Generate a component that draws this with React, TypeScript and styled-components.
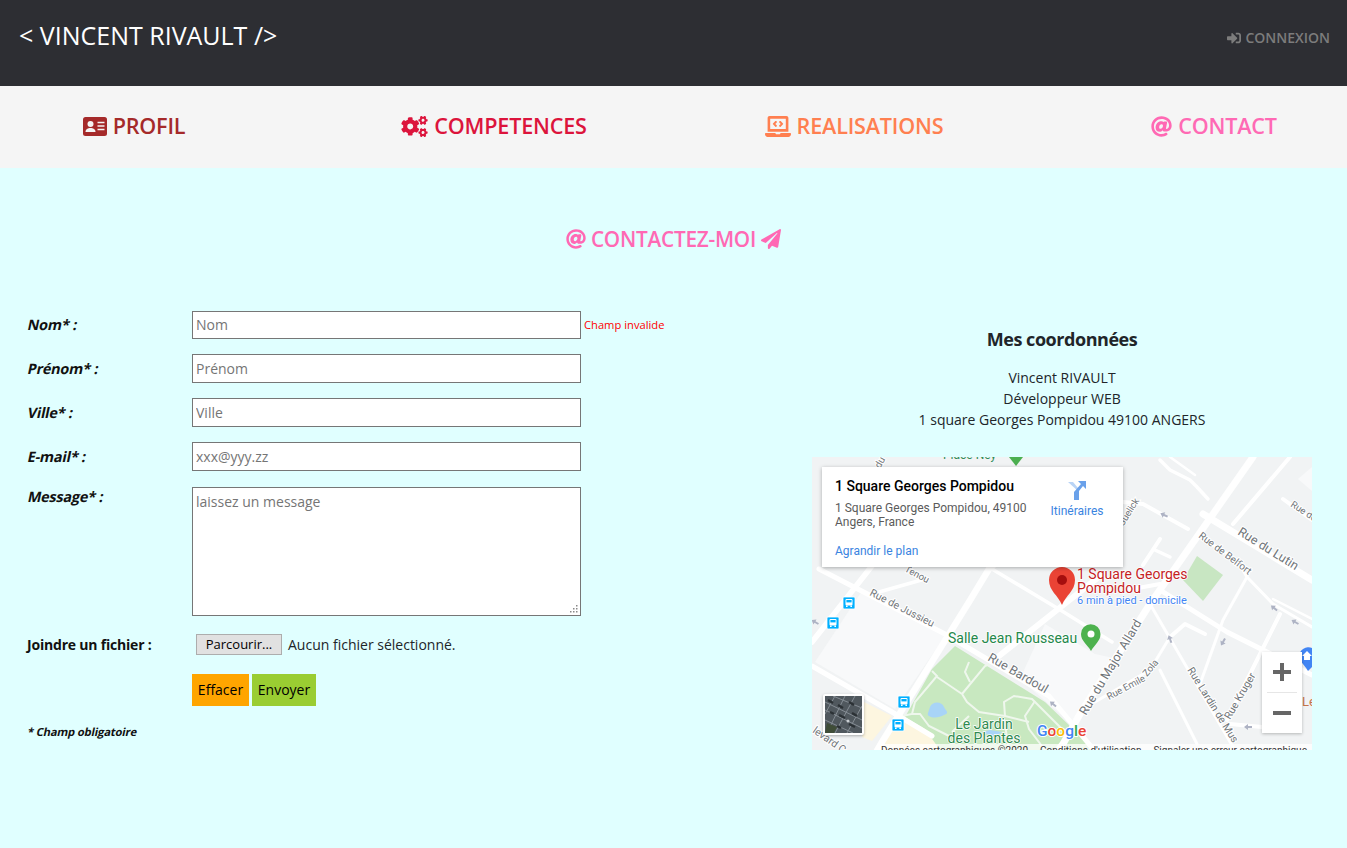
import React from "react";
import styled, { createGlobalStyle } from "styled-components";
import { FaCogs, FaLaptopCode, FaAt, FaPaperPlane, FaSignInAlt } from "react-icons/fa";

const Global = createGlobalStyle`
  html, body { margin: 0; padding: 0; background: #e0ffff; }
  body { font-family: "Open Sans", "Liberation Sans", sans-serif; font-size: 14px; color: #212529; overflow: hidden; }
`;
const Page = styled.div`width: 1347px; height: 848px; background: #e0ffff; overflow: hidden;`;
const TopBar = styled.header`
  height: 86px; background: #2d2e33; display: flex; justify-content: space-between; align-items: flex-start;
  padding: 0 17px 0 19px; box-sizing: border-box;
`;
const Brand = styled.div`color: #fff; font-size: 25px; line-height: 33px; margin-top: 19px;`;
const Login = styled.a`
  color: #7c7c7c; font-size: 14px; font-weight: 600; line-height: 20px; margin-top: 28px; display: flex; align-items: center; gap: 4px;
  svg { width: 14px; height: 14px; flex: none; }
`;
const NavBar = styled.nav`
  height: 82px; box-sizing: border-box; padding: 0 0 2px 1px; background: #f5f5f5; display: grid; grid-template-columns: repeat(4, 266px); column-gap: 94px; align-items: center;
`;
const NavItem = styled.a<{ $color: string; $iconW: number }>`
  color: ${(p) => p.$color}; font-size: 21.6px; font-weight: 600; letter-spacing: -0.2px;
  display: flex; justify-content: center; align-items: center; gap: 6px; line-height: 28px;
  svg { width: ${(p) => p.$iconW}px; height: 21px; flex: none; }
`;
const PageTitle = styled.h1`
  margin: 0; padding: 57px 0 57.6px; box-sizing: border-box; display: flex; justify-content: center; align-items: center; gap: 5px;
  color: #ff69b4; font-size: 20.8px; font-weight: 600; line-height: 28px; letter-spacing: -0.25px;
  svg { width: 20px; height: 20px; flex: none; }
`;
const Content = styled.main`display: flex; justify-content: space-between; padding: 0 35px 0 28px;`;
const FormArea = styled.form`display: flex; flex-direction: column; width: 660px;`;
const Row = styled.div`display: grid; grid-template-columns: 164px 389px auto; align-items: center; margin-bottom: 15px;`;
const Label = styled.label`
  display: block; font-size: 14.4px; font-weight: 700; color: #111; letter-spacing: -0.2px;
  transform: skewX(-12deg); transform-origin: left center; white-space: nowrap;
`;
const TextInput = styled.input`
  width: 389px; height: 28.8px; box-sizing: border-box; border: 1px solid #767676; background: #fff; padding: 0 3px; margin: 0;
  font: 14px "Open Sans", sans-serif; &::placeholder { color: #757575; opacity: 1; }
`;
const ErrorText = styled.span`font-size: 11.2px; color: #f00; padding-left: 3px;`;
const MessageRow = styled.div`display: grid; grid-template-columns: 164px 389px; margin-top: 1px;`;
const MessageLabel = styled(Label)`line-height: 20px; align-self: start;`;
const MessageBox = styled.div`position: relative; width: 389px; height: 129px;`;
const MessageInput = styled.textarea`
  width: 389px; height: 129px; box-sizing: border-box; border: 1px solid #767676; background: #fff; padding: 4px 3px; margin: 0; resize: none;
  font: 14px/19px "Open Sans", sans-serif; display: block; &::placeholder { color: #757575; opacity: 1; }
`;
const Grip = styled.svg`position: absolute; right: 3px; bottom: 3px;`;
const FileRow = styled.div`display: flex; align-items: center; margin-top: 18px; height: 21px;`;
const FileLabel = styled.label`font-size: 14px; font-weight: 700; color: #111; width: 169px; margin-left: -1px; letter-spacing: -0.2px;`;
const FileButton = styled.button`
  width: 86px; height: 21px; padding: 0; box-sizing: border-box; background: #e1e1e1; border: 1px solid #adadad; font: 13px "Open Sans", sans-serif; color: #000; margin-right: 6px;
`;
const FileStatus = styled.span`font-size: 14px; color: #212529;`;
const Actions = styled.div`display: flex; gap: 3px; margin: 19px 0 0 164px;`;
const ActionButton = styled.button<{ $bg: string; $w: number }>`
  background: ${(p) => p.$bg}; width: ${(p) => p.$w}px; height: 32px; border: 0; padding: 0; font: 14px "Open Sans", sans-serif; color: #000;
`;
const Note = styled.p`
  margin: 18px 0 0; font-size: 11.2px; line-height: 15px; font-weight: 700; color: #111; letter-spacing: -0.15px;
  transform: skewX(-12deg); transform-origin: left center;
`;
const Side = styled.aside`width: 500px; display: flex; flex-direction: column; align-items: center;`;
const SideTitle = styled.h2`margin: 16.4px 0 0; font-size: 18px; line-height: 25px; font-weight: 700; color: #212529; letter-spacing: -0.45px;`;
const Address = styled.p`margin: 15px 0 0; text-align: center; line-height: 21px; font-size: 14px; color: #212529;`;
const MapFrame = styled.div`position: relative; width: 500px; height: 293px; margin-top: 27px; overflow: hidden; background: #f1f3f4; font-family: Roboto, sans-serif;`;
const MapArt = styled.svg`display: block;`;
const InfoCard = styled.div`
  position: absolute; left: 10px; top: 10px; width: 301px; height: 100px; background: #fff; box-shadow: 0 1px 4px rgba(0,0,0,.3);
  padding: 10px 13px; box-sizing: border-box;
`;
const InfoTitle = styled.div`font-size: 14px; font-weight: 500; color: #000; line-height: 18px; white-space: nowrap;`;
const InfoAddr = styled.div`font-size: 12px; line-height: 14px; color: #5b5b5b; margin-top: 6px; width: 200px;`;
const InfoLink = styled.a`position: absolute; left: 13px; top: 77px; font-size: 12px; line-height: 14px; color: #3a84df;`;
const Directions = styled.div`
  position: absolute; left: 221px; top: 14px; width: 68px; display: flex; flex-direction: column; align-items: center; gap: 4px; font-size: 12px; line-height: 14px; color: #3a84df;
`;
const ZoomBox = styled.div`
  position: absolute; left: 450px; top: 195px; width: 40px; height: 81px; background: #fff; box-shadow: 0 1px 3px rgba(0,0,0,.25);
  display: flex; flex-direction: column; align-items: center; justify-content: space-between;
`;
const ZoomBtn = styled.div`height: 40px; width: 30px; display: flex; align-items: center; justify-content: center;`;
const ZoomLine = styled.div`height: 1px; width: 30px; background: #e6e6e6;`;
const Thumb = styled.div`
  position: absolute; left: 11px; top: 237px; width: 41px; height: 41px; box-sizing: border-box; border: 2px solid #fff; border-radius: 2px; overflow: hidden; box-shadow: 0 1px 3px rgba(0,0,0,.3); background: #4b5358;
`;
const Attribution = styled.div`
  position: absolute; left: 69px; right: 0; top: 287px; height: 20px; background: rgba(255,255,255,.75); display: flex; gap: 12px; font-size: 10px; line-height: 14px; color: #333; white-space: nowrap;
`;

const roads: [string, number][] = [
  ["M1253 458 L1150 605 L1080 715 L1063 745 L1050 762", 7],
  ["M1203 515 L1312 581", 7],
  ["M999 657 L1062 607 L1100 577", 6],
  ["M1000 560 L989 570 L969 603 L882 743 L875 755", 6.5],
  ["M819 570 L945 635 L1049 697 L1094 751", 5],
  ["M992 570 L1062 612 L1112 643", 3.5],
  ["M875 563 L812 643", 5.5],
  ["M812 667 L892 713 L932 737", 5],
  ["M879 593 L925 580", 3.5],
  ["M1290 458 L1233 525", 4],
  ["M1123 503 L1143 505 L1188 530", 4],
  ["M1160 461 L1170 471 L1190 481 L1197 488 L1208 500", 3.5],
  ["M1170 458 L1195 476", 2.5],
  ["M1160 540 L1143 566", 4],
  ["M1155 551 L1170 558", 3.5],
  ["M1198 536 L1237 561 L1247 578 L1223 621 L1200 685", 3],
  ["M1247 578 L1273 605 L1312 628", 3],
  ["M1273 600 L1312 620", 2.5],
  ["M1160 591 L1227 633 L1263 651 L1312 676", 5],
  ["M1280 615 L1227 721", 4],
  ["M1150 605 L1233 748", 3],
  ["M1170 638 L1150 671 L1095 703", 3],
  ["M1170 638 L1185 625 L1205 635", 4],
  ["M1160 671 L1197 745", 3],
  ["M1230 725 L1262 728", 4],
  ["M1283 500 L1312 521", 4],
  ["M1127 591 L1160 585", 4],
];
const parkPaths: string[] = [
  "M932 672 L937 677 L915 703 L912 715 L902 717",
  "M912 715 L920 715 L929 727 L949 737",
  "M937 678 L962 695",
  "M962 695 L985 667 L990 665",
  "M962 695 L967 703 L979 713 L1005 717 L1029 723",
  "M969 663 L965 673 L970 683",
  "M1005 717 L1004 703 L1014 697 L1032 700 L1069 737",
  "M1035 702 L1025 717 L1029 730 L1045 751",
  "M969 717 L952 733",
  "M1004 720 L1009 751",
];

const Bus = ({ x, y }: { x: number; y: number }) => (
  <g transform={`translate(${x - 6} ${y - 6})`}>
    <rect width="12" height="12" rx="1" fill="#00b0ff" stroke="#fff" strokeWidth="0.8" />
    <rect x="2.5" y="2" width="7" height="6.6" rx="1" fill="#fff" />
    <rect x="3.4" y="3" width="5.2" height="2.4" fill="#00b0ff" />
    <rect x="3" y="8.6" width="1.6" height="1.4" fill="#fff" />
    <rect x="7.4" y="8.6" width="1.6" height="1.4" fill="#fff" />
  </g>
);

const Street = ({ x, y, r, size = 10.5, children }: { x: number; y: number; r: number; size?: number; children: string }) => (
  <text x={x} y={y} fontSize={size} fill="#6f7478" stroke="#fff" strokeWidth="2" paintOrder="stroke" transform={`rotate(${r} ${x} ${y})`} fontFamily="Roboto, sans-serif">
    {children}
  </text>
);

const Arrow = ({ x, y, r }: { x: number; y: number; r: number }) => (
  <path d="M-4 0 L0 -3 L0 -1 L4 -1 L4 1 L0 1 L0 3 Z" fill="#aeb3c4" transform={`translate(${x} ${y}) rotate(${r})`} />
);

const PlaceLabel = styled.text`font-family: Roboto, sans-serif; stroke: #fff; stroke-width: 1.5px; paint-order: stroke;`;

const MapDrawing = () => (
  <MapArt width="500" height="293" viewBox="812 458 500 293">
    <rect x="812" y="458" width="500" height="293" fill="#f1f3f4" />
    <path d="M862 592 L945 637 L895 710 L815 663 Z" fill="#f8f9fa" />
    <path d="M1045 625 L1095 655 L1118 660 L1075 728 L1020 680 Z" fill="#f8f9fa" />
    <path d="M1298 480 L1312 468 L1312 492 Z" fill="#f8f9fa" />
    <path d="M864 703 L892 717 L872 742 L862 738 Z" fill="#fdf6e0" />
    <path d="M902 723 L882 742 L880 751 L945 751 L922 727 Z" fill="#fdf6e0" />
    <path d="M1197 557 L1223 576 L1203 602 L1183 581 Z" fill="#c8e6c2" />
    <path d="M955 647 L1045 703 L1095 751 L940 751 L925 730 L905 718 L932 670 Z" fill="#c8e8c0" />
    <path d="M930 708 C932 702 942 702 944 708 C946 712 950 714 944 716 C938 720 926 719 928 714 Z" fill="#a8d4f7" />
    <path d="M982 733 L990 731 L1002 733 L994 738 Z" fill="#a8d4f7" />
    {parkPaths.map((d) => <path key={d} d={d} fill="none" stroke="#eff7ed" strokeWidth="2" />)}
    {roads.map(([d, w]) => <path key={d} d={d} fill="none" stroke="#fff" strokeWidth={w} strokeLinecap="round" strokeLinejoin="round" />)}

    <Street x={869} y={596} r={27}>Rue de Jussieu</Street>
    <Street x={987} y={661} r={30} size={12.5}>Rue Bardoul</Street>
    <Street x={1086} y={717} r={-59} size={12.5}>Rue du Major Allard</Street>
    <Street x={1109} y={701} r={-28} size={9.5}>Rue Emile</Street>
    <Street x={1147} y={678} r={-50} size={9.5}>Zola</Street>
    <Street x={1187} y={671} r={58}>Rue Lardin de Mus</Street>
    <Street x={1230} y={721} r={-60}>Rue Kruger</Street>
    <Street x={1237} y={535} r={32} size={12.5}>Rue du Lutin</Street>
    <Street x={1198} y={538} r={37} size={10}>Rue de Belfort</Street>
    <Street x={1290} y={507} r={33} size={9.5}>Rue de</Street>
    <Street x={904} y={572} r={28} size={9.5}>Tenou</Street>
    <Street x={1123} y={528} r={-58} size={9.5}>Guelick</Street>
    <Street x={812} y={733} r={35}>levard C</Street>
    <Street x={880} y={470} r={-60} size={10}>du</Street>

    <Arrow x={1164} y={516} r={25} />
    <Arrow x={815} y={623} r={30} />
    <Arrow x={1053} y={705} r={40} />
    <Arrow x={1170} y={640} r={70} />
    <Arrow x={1223} y={643} r={-60} />
    <Arrow x={1248} y={728} r={0} />
    <Arrow x={1274} y={609} r={40} />
    <Arrow x={1295} y={623} r={30} />

    <Bus x={849} y={604} />
    <Bus x={833} y={624} />
    <Bus x={904} y={703} />
    <Bus x={898} y={726} />

    <text x="943" y="460" fontSize="12" fill="#2e8b57" fontFamily="Roboto, sans-serif">Place Ney</text>
    <path d="M1009 458 L1023 458 L1016 467 Z" fill="#4caf50" />

    <PlaceLabel x="948" y="644" fontSize="14" fill="#24874a">Salle Jean Rousseau</PlaceLabel>
    <path d="M1091 652 C1087 645 1081 642 1081 635 A9.500 9.500 0 0 1 1100.500 635 C1100.500 642 1095 645 1091 652 Z" fill="#4db24e" />
    <circle cx="1091" cy="635" r="3.500" fill="#fff" />

    <PlaceLabel x="984" y="730" fontSize="14" textAnchor="middle" fill="#2f8a4f">Le Jardin</PlaceLabel>
    <PlaceLabel x="984" y="744" fontSize="14" textAnchor="middle" fill="#2f8a4f">des Plantes</PlaceLabel>

    <path d="M1062 606 C1058 596 1049 592 1049 581 A13 13 0 0 1 1075 581 C1075 592 1066 596 1062 606 Z" fill="#ea4335" />
    <circle cx="1062" cy="581" r="5" fill="#a50e0e" />
    <PlaceLabel x="1077" y="580" fontSize="14" fill="#c5221f">1 Square Georges</PlaceLabel>
    <PlaceLabel x="1077" y="594" fontSize="14" fill="#c5221f">Pompidou</PlaceLabel>
    <PlaceLabel x="1077" y="605" fontSize="11" fill="#4285f4">6 min à pied - domicile</PlaceLabel>

    <path d="M1308 672 C1304 665 1299 662 1299 657 A9.500 9.500 0 0 1 1312 649 L1312 668 Z" fill="#4285f4" />
    <path d="M1302 657 L1307 652 L1312 657 L1310 657 L1310 661 L1304 661 L1304 657 Z" fill="#fff" />
    <text x="1302" y="707" fontSize="13" fill="#c5744a" fontFamily="Roboto, sans-serif">Le</text>

    <text fontFamily="Roboto, sans-serif" fontSize="15.500" fontWeight="500" x="1037" y="737" stroke="#fff" strokeWidth="2" paintOrder="stroke">
      <tspan fill="#4285f4">G</tspan><tspan fill="#ea4335">o</tspan><tspan fill="#fbbc05">o</tspan><tspan fill="#4285f4">g</tspan><tspan fill="#34a853">l</tspan><tspan fill="#ea4335">e</tspan>
    </text>
  </MapArt>
);

const thumbLines = [
  "M0 6 L37 24", "M0 14 L37 32", "M0 24 L28 37", "M8 0 L37 12",
  "M20 0 L2 37", "M30 0 L10 37", "M10 0 L0 18", "M37 10 L22 37",
];
const thumbShade = ["M3 4 L8 7", "M13 9 L18 12", "M24 6 L29 9", "M14 19 L20 22", "M5 16 L9 18", "M27 17 L32 20", "M24 28 L30 31", "M12 30 L16 32"];
const ThumbArt = () => (
  <svg width="37" height="37" viewBox="0 0 37 37" style={{ display: "block" }}>
    <rect width="37" height="37" fill="#50585e" />
    {thumbLines.map((d) => <path key={d} d={d} stroke="#858d94" strokeWidth="1" />)}
    {thumbShade.map((d) => <path key={d} d={d} stroke="#2b3135" strokeWidth="2.500" />)}
    <path d="M2 27 L12 31 L9 37 L0 37 Z" fill="#3f4d38" />
    <circle cx="23" cy="25" r="1.500" fill="#c9ced2" />
  </svg>
);

const DirectionsIcon = () => (
  <svg width="20" height="19" viewBox="0 0 20 19">
    <path d="M1 1 L6 1 L11 7 L11 10 Z" fill="#b9d4f6" />
    <path d="M7 19 L12 19 L12 10 L16 5 L19 8 L19 0 L11 0 L14 3 L7 11 Z" fill="#6aa1ea" />
  </svg>
);

const IdCardIcon = () => (
  <svg viewBox="0 0 24 19">
    <rect width="24" height="19" rx="2.500" fill="currentColor" />
    <circle cx="7.500" cy="7" r="3" fill="#f5f5f5" />
    <path d="M2.500 15 C2.500 12 5 11 7.500 11 C10 11 12.500 12 12.500 15 Z" fill="#f5f5f5" />
    <path d="M14.500 5.500 H21.500 M14.500 9 H21.500 M14.500 12.500 H21.500" stroke="#f5f5f5" strokeWidth="1.300" />
  </svg>
);

export default function App() {
  return (
    <Page>
      <Global />
      <TopBar>
        <Brand>&lt; VINCENT RIVAULT /&gt;</Brand>
        <Login><FaSignInAlt />CONNEXION</Login>
      </TopBar>
      <NavBar>
        <NavItem $color="#a52a2a" $iconW={24}><IdCardIcon />PROFIL</NavItem>
        <NavItem $color="#dc143c" $iconW={27}><FaCogs />COMPETENCES</NavItem>
        <NavItem $color="#ff7f50" $iconW={26}><FaLaptopCode />REALISATIONS</NavItem>
        <NavItem $color="#ff69b4" $iconW={21}><FaAt />CONTACT</NavItem>
      </NavBar>
      <PageTitle><FaAt />CONTACTEZ-MOI<FaPaperPlane /></PageTitle>
      <Content>
        <FormArea>
          <Row>
            <Label>Nom* :</Label>
            <TextInput placeholder="Nom" />
            <ErrorText>Champ invalide</ErrorText>
          </Row>
          <Row><Label>Prénom* :</Label><TextInput placeholder="Prénom" /></Row>
          <Row><Label>Ville* :</Label><TextInput placeholder="Ville" /></Row>
          <Row><Label>E-mail* :</Label><TextInput placeholder="xxx@yyy.zz" /></Row>
          <MessageRow>
            <MessageLabel>Message* :</MessageLabel>
            <MessageBox>
              <MessageInput placeholder="laissez un message" />
              <Grip width="9" height="9" viewBox="0 0 9 9">
                <path d="M7 1h1.500v1.500H7zM4 4h1.500v1.500H4zM7 4h1.500v1.500H7zM1 7h1.500v1.500H1zM4 7h1.500v1.500H4zM7 7h1.500v1.500H7z" fill="#8a8a8a" />
              </Grip>
            </MessageBox>
          </MessageRow>
          <FileRow>
            <FileLabel>Joindre un fichier :</FileLabel>
            <FileButton type="button">Parcourir...</FileButton>
            <FileStatus>Aucun fichier sélectionné.</FileStatus>
          </FileRow>
          <Actions>
            <ActionButton type="button" $bg="#ffa500" $w={57}>Effacer</ActionButton>
            <ActionButton type="button" $bg="#9acd32" $w={64}>Envoyer</ActionButton>
          </Actions>
          <Note>* Champ obligatoire</Note>
        </FormArea>
        <Side>
          <SideTitle>Mes coordonnées</SideTitle>
          <Address>
            Vincent RIVAULT<br />
            Développeur WEB<br />
            1 square Georges Pompidou 49100 ANGERS
          </Address>
          <MapFrame>
            <MapDrawing />
            <InfoCard>
              <InfoTitle>1 Square Georges Pompidou</InfoTitle>
              <InfoAddr>1 Square Georges Pompidou, 49100 Angers, France</InfoAddr>
              <InfoLink>Agrandir le plan</InfoLink>
              <Directions><DirectionsIcon />Itinéraires</Directions>
            </InfoCard>
            <Thumb><ThumbArt /></Thumb>
            <ZoomBox>
              <ZoomBtn>
                <svg width="18" height="18" viewBox="0 0 18 18"><path d="M7 0h4v7h7v4h-7v7H7v-7H0V7h7z" fill="#666" /></svg>
              </ZoomBtn>
              <ZoomLine />
              <ZoomBtn>
                <svg width="18" height="18" viewBox="0 0 18 18"><path d="M0 7h18v4H0z" fill="#666" /></svg>
              </ZoomBtn>
            </ZoomBox>
            <Attribution>
              <span>Données cartographiques ©2020</span>
              <span>Conditions d'utilisation</span>
              <span>Signaler une erreur cartographique</span>
            </Attribution>
          </MapFrame>
        </Side>
      </Content>
    </Page>
  );
}
